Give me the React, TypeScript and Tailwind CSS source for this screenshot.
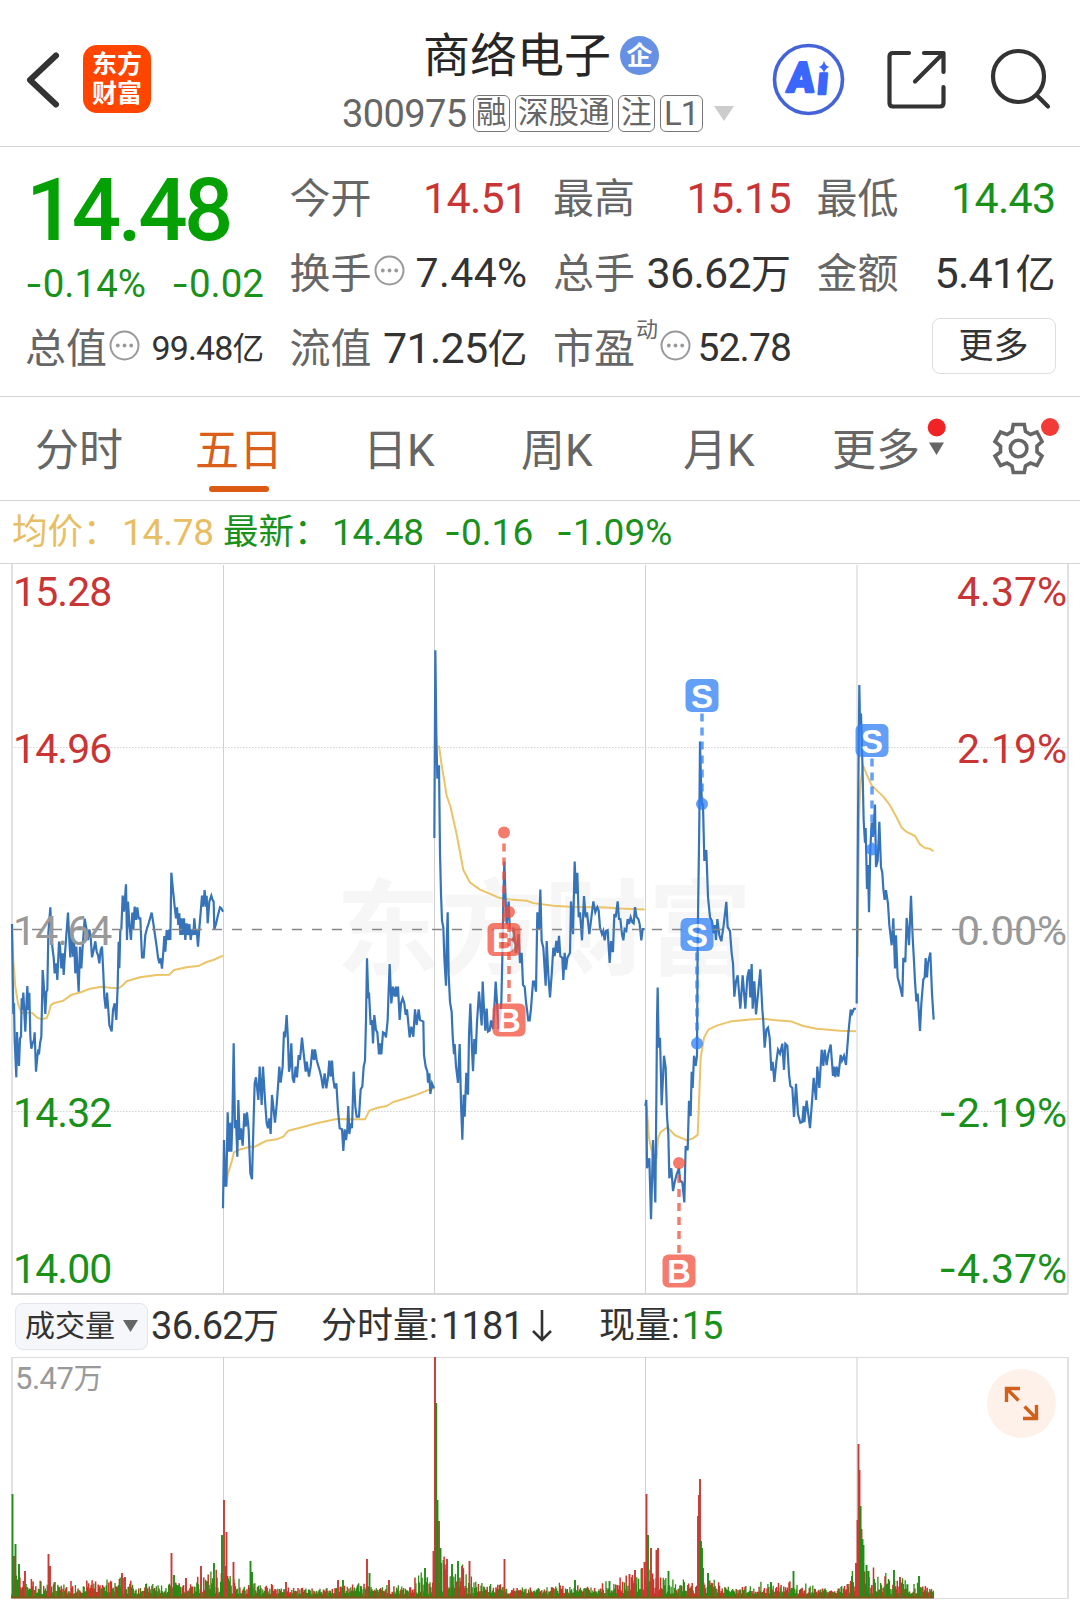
import React from "react";

const GREEN = "#1a911a";
const RED = "#c93535";

interface Session {
    transform: string,
    price: string,
    avg: string,
}

interface Mark {
    type: "B" | "S",
    x: number,
    y: number,
    dotX: number,
    dotY: number,
}

const sessions: Session[] = [
    {
        transform: "translate(0 840) scale(0.33333)",
        price: "36,252 38,400 40,522 42,490 44,600 49,712 51,576 54,640 57,678 60,595 63,590 65,475 67,510 70,458 73,520 76,575 79,500 82,438 85,510 88,458 91,590 94,626 98,610 102,600 104,577 108,695 112,650 115,628 117,643 120,610 124,590 128,390 131,430 136,522 139,455 142,450 145,280 151,202 155,300 158,330 161,352 164,400 169,370 172,420 177,305 180,318 184,385 188,340 191,405 195,340 199,285 204,218 208,300 211,352 216,260 219,350 222,300 226,400 229,320 233,400 236,455 240,320 244,385 248,320 254,236 260,270 264,300 268,268 272,290 276,352 281,330 286,304 290,335 294,345 298,370 302,330 306,320 310,400 313,470 317,506 321,458 325,510 328,555 335,574 339,510 344,490 349,540 353,440 356,305 358,385 361,270 364,268 368,167 372,215 378,133 381,300 384,185 388,250 393,300 397,218 400,268 404,200 408,240 412,202 416,235 421,235 426,352 431,352 436,285 441,265 446,250 455,218 460,250 465,285 470,320 474,352 478,370 482,355 486,386 490,335 493,288 496,335 500,270 504,300 508,268 511,300 514,98 519,150 524,200 528,235 531,202 535,255 538,220 541,285 545,235 548,285 552,235 556,300 560,250 564,285 568,252 572,300 576,268 580,285 583,235 587,285 590,268 594,320 598,265 602,218 606,167 610,200 614,150 618,200 620,167 623,250 628,185 634,167 638,180 641,185 643,268 648,252 654,225 660,202 664,205 669,215",
        avg: "36,270 40,360 46,440 54,490 64,518 85,518 98,520 110,532 125,538 140,534 146,520 152,496 160,490 190,482 215,464 245,456 270,446 305,440 330,443 355,445 366,438 380,424 420,412 470,405 508,404 522,390 560,382 598,377 620,366 640,360 669,347",
    },
    {
        transform: "translate(0 840) scale(0.33333)",
        price: "669,1105 672,900 676,1037 679,1037 683,817 687,935 690,848 694,935 697,850 701,610 705,865 708,840 712,950 715,780 719,900 723,865 728,917 733,820 737,860 741,817 746,870 751,1000 756,1018 760,870 764,730 768,712 775,780 779,680 785,795 789,680 795,780 800,850 804,865 808,835 812,882 816,765 820,800 825,848 830,795 834,740 838,680 842,728 848,680 852,575 855,592 860,525 864,600 867,695 870,680 874,610 878,715 882,728 887,680 891,712 896,645 900,660 906,593 911,640 917,695 920,665 927,710 932,680 937,628 942,660 945,628 950,660 955,678 960,695 964,712 969,745 974,700 979,745 984,712 988,662 992,710 996,662 1000,720 1004,745 1009,730 1014,810 1019,865 1026,868 1030,933 1034,868 1038,900 1042,868 1045,798 1048,882 1052,850 1056,865 1061,695 1066,800 1070,830 1077,830 1082,748 1087,740 1091,680 1095,662 1098,540 1101,355 1105,475 1107,458 1112,555 1116,540 1119,610 1123,525 1128,570 1132,577 1137,643 1140,610 1144,643 1149,577 1154,580 1158,592 1163,540 1166,450 1169,372 1174,490 1179,440 1184,470 1188,440 1191,470 1194,440 1199,540 1203,490 1208,475 1213,490 1217,525 1221,508 1229,592 1234,560 1240,590 1245,508 1250,555 1256,508 1260,540 1265,542 1270,545 1272,645 1277,680 1282,695 1284,728 1288,700 1291,762 1296,730 1302,745",
        avg: "678,1035 684,1000 695,965 702,937 715,930 750,920 765,920 780,912 800,902 830,898 850,890 865,872 900,863 950,850 1010,837 1050,838 1095,838 1108,812 1130,804 1160,798 1180,786 1220,774 1250,764 1290,748 1302,745",
    },
    {
        transform: "translate(420 630) scale(0.33333 0.33803)",
        price: "43,615 46,60 49,310 52,440 57,400 60,660 63,780 66,860 70,880 73,970 78,1052 80,930 83,835 86,1020 90,1100 95,1130 98,1200 102,1255 104,1225 108,1290 114,1340 119,1225 123,1400 127,1508 131,1375 134,1440 139,1310 144,1375 147,1200 151,1105 156,1240 159,1305 163,1210 167,1255 171,1160 177,1070 181,1120 185,1170 188,1040 192,1120 196,1185 200,1120 204,1188 209,1185 213,1155 219,1180 223,1120 227,1040 231,1100 236,1180 240,1150 244,1100 247,970 250,800 253,685 257,800 260,870 266,803 270,900 275,950 280,880 288,955 296,900 300,985 305,955 309,1050 314,1055 318,1100 325,1155 329,1155 333,1120 339,1040 343,1040 348,1070 352,835 357,885 361,768 365,920 370,940 377,1052 380,920 385,1020 390,1087 395,1020 400,940 404,965 409,920 413,955 417,905 421,965 427,970 430,1035 434,955 438,1005 442,970 450,955 453,803 459,900 464,685 468,780 472,718 476,850 480,835 486,918 492,787 497,850 501,835 508,900 513,860 520,803 526,835 532,820 536,830 540,880 546,900 550,890 554,918 558,890 563,888 569,985 573,920 576,950 579,950 583,840 587,850 593,803 597,855 601,855 606,900 610,918 614,885 619,890 623,855 627,870 632,850 637,865 641,868 645,820 650,850 655,855 659,870 664,918 668,885 674,885",
        avg: "57,342 65,400 80,490 92,525 110,605 130,710 150,747 180,768 240,793 270,797 320,801 340,808 400,816 450,819 560,821 600,824 674,827",
    },
    {
        transform: "translate(630 660) scale(0.33333 0.40177)",
        price: "46,1110 49,1095 51,1265 58,1240 63,1392 66,1300 69,1195 76,1350 79,1100 81,900 83,815 86,965 90,940 95,1108 102,985 107,1015 111,1135 115,1180 118,1290 124,1265 129,1322 134,1300 140,1280 147,1265 150,1295 157,1300 163,1350 167,1210 173,1220 177,1097 182,1135 185,1025 188,1065 192,985 197,1010 201,985 203,700 205,580 208,400 210,203 213,300 216,360 219,360 223,500 229,473 234,590 240,640 246,650 250,680 254,660 258,697 262,645 268,685 274,700 281,660 289,602 293,665 300,675 305,730 309,755 313,838 318,800 323,785 331,868 338,785 346,868 352,790 357,770 361,840 365,757 368,868 373,800 378,882 383,840 391,770 397,870 400,900 404,965 409,920 414,915 419,940 424,1022 428,1000 433,1050 439,1000 444,970 450,980 457,955 462,1020 466,955 472,960 477,1030 481,1060 487,1065 492,1137 498,1055 504,1130 511,1152 517,1150 521,1110 523,1150 530,1097 534,1125 540,1165 546,1100 551,1040 558,1095 562,1012 568,1065 575,970 580,1010 584,970 590,1008 595,980 602,957 609,1035 612,1012 616,1038 620,1012 625,1037 632,983 636,997 642,985 648,1008 655,930 662,870 666,880 672,868 678,868",
        avg: "50,1110 57,1190 70,1240 80,1240 84,1190 92,1175 112,1163 135,1183 155,1190 172,1196 190,1190 203,1182 207,1100 212,990 222,940 235,920 260,910 300,900 360,895 400,893 430,896 485,900 520,911 560,918 630,923 678,924",
    },
    {
        transform: "translate(630 660) scale(0.33333 0.40177)",
        price: "680,855 684,400 688,62 690,160 693,133 697,250 701,400 705,455 707,418 711,570 714,510 717,628 721,470 725,405 729,440 735,360 738,515 743,500 748,403 753,515 757,530 760,570 764,597 768,573 774,607 778,660 785,710 790,643 795,768 798,685 803,790 810,812 817,838 820,742 826,752 830,642 837,710 843,587 848,690 852,750 855,800 859,850 863,830 870,923 874,855 880,795 884,790 887,742 891,790 894,755 901,728 906,830 911,895",
        avg: "683,740 687,400 691,310 699,262 710,285 725,312 760,340 780,362 800,392 815,417 830,428 855,438 870,459 885,468 900,470 911,476",
    },
];

const marks: Mark[] = [
    { type: "B", x: 504, y: 939.5, dotX: 504, dotY: 832.5 },
    { type: "B", x: 509, y: 1020, dotX: 509, dotY: 912 },
    { type: "B", x: 679, y: 1271, dotX: 679, dotY: 1163 },
    { type: "S", x: 702, y: 695.5, dotX: 702, dotY: 804 },
    { type: "S", x: 697, y: 934.5, dotX: 697, dotY: 1043.5 },
    { type: "S", x: 872, y: 740.5, dotX: 872, dotY: 849.5 },
];

const priceLabels = [
    { y: 591, price: "15.28", pct: "4.37%", color: RED },
    { y: 748, price: "14.96", pct: "2.19%", color: RED },
    { y: 930, price: "14.64", pct: "0.00%", color: "#999999" },
    { y: 1112, price: "14.32", pct: "-2.19%", color: GREEN },
    { y: 1268, price: "14.00", pct: "-4.37%", color: GREEN },
];

// [x, height] of the quiet volume level, interpolated between the points
const level = [
    [12, 34], [20, 30], [40, 16], [60, 14], [120, 20], [140, 14], [165, 12], [175, 18], [185, 12], [200, 24], [215, 34],
    [230, 34], [240, 20], [255, 14], [290, 8], [320, 7], [350, 16], [380, 9], [410, 15], [425, 28], [440, 46], [465, 32],
    [480, 14], [520, 8], [560, 12], [600, 11], [620, 20], [640, 34], [655, 46], [665, 20], [685, 18], [695, 12], [708, 22],
    [720, 12], [790, 14], [830, 8], [850, 22], [865, 36], [880, 30], [900, 24], [920, 14], [934, 10],
];

const redSpikes = [
    [14, 42], [25, 27], [48.5, 44], [50, 32], [122, 25], [125, 21], [171.5, 45], [186, 20], [201, 32], [224, 98], [226.5, 66],
    [233.5, 36], [286, 16], [338, 18], [367, 39], [389, 18], [433.5, 47], [435, 241], [439, 77], [447, 39], [462, 32],
    [469.5, 37], [504.5, 39], [629.5, 24], [635, 28], [642, 30], [644.5, 36], [646.5, 104], [651, 50], [656.5, 48],
    [658, 50], [698, 82], [699, 103], [700, 119], [703, 30], [847.5, 14], [856, 35], [857.5, 78], [858.5, 154],
    [859.5, 128], [861.5, 69], [900, 21],
];

const greenSpikes = [
    [12.5, 104], [15.5, 54], [19, 34], [174, 23], [214, 35], [222, 63], [250.5, 37], [252, 26], [343, 18], [369.5, 25],
    [425, 30], [436.2, 195], [437.5, 98], [440.5, 50], [452, 34], [458, 37], [575, 18], [609.5, 17], [648, 63],
    [668.5, 27], [684, 16], [701, 57], [702, 50], [708, 25], [771, 16], [793.5, 27], [852, 22], [860.6, 92],
    [862.5, 59], [863.5, 53], [866.5, 33], [868.5, 27], [894, 28], [919, 22],
];

function bar(x: number, h: number) {
    return `M${x.toFixed(1)} 1598V${(1598 - h).toFixed(1)}`;
}

function levelAt(x: number) {
    const i = Math.max(1, level.findIndex((p) => p[0] >= x));
    const [x0, h0] = level[i - 1];
    const [x1, h1] = level[i];
    return h0 + ((h1 - h0) * (x - x0)) / (x1 - x0);
}

function buildVolume() {
    let red = "";
    let green = "";
    let seed = 7;
    const next = () => {
        seed = (seed * 16807) % 2147483647;
        return seed / 2147483647;
    };
    for (let x = 12; x < 934; x += 0.88) {
        const h = 4 + levelAt(x) * next() * (0.4 + 0.6 * next());
        if (next() > 0.5) {
            red += bar(x, h);
        } else {
            green += bar(x, h);
        }
    }
    return { red, green };
}

const volume = buildVolume();

function Dots() {
    return (
        <svg className="h-[31px] w-[31px] shrink-0" viewBox="0 0 31 31" fill="#999">
            <circle cx="15.5" cy="15.5" r="14" fill="none" stroke="#999" strokeWidth="2" />
            <circle cx="8.8" cy="15.5" r="1.9" />
            <circle cx="15.5" cy="15.5" r="1.9" />
            <circle cx="22.2" cy="15.5" r="1.9" />
        </svg>
    )
}

function Tag({ children }: { children: React.ReactNode }) {
    return (
        <span className="flex h-[37px] shrink-0 items-center rounded-md border border-[#777] px-[2.500px] text-[30.500px] leading-none whitespace-nowrap">
            {children}
        </span>
    )
}

function Signed({ children }: { children: string }) {
    return (
        <span>
            <span className="font-[Inter] tracking-normal">-</span>
            {children}
        </span>
    )
}

function Header() {
    return (
        <header className="flex h-[147px] border-b border-[#d4d4d4] text-[#262626]">
            <svg className="mt-[45px] ml-6 h-[70px] w-10 shrink-0" viewBox="24 45 40 70" fill="none" stroke="#333" strokeWidth="6" strokeLinecap="round" strokeLinejoin="round">
                <path d="M56 55.500L30 80L56 104.500" />
            </svg>
            <div className="mt-[45px] ml-[19px] flex h-[68px] w-[68px] shrink-0 flex-col items-center justify-center rounded-[14px] bg-[#ff4500] text-[25px] leading-[29px] font-bold text-white">
                <span>东方</span>
                <span>财富</span>
            </div>
            <div className="ml-[191px] w-[426px] shrink-0">
                <div className="mt-[27px] ml-[81px] flex h-14 items-center">
                    <h1 className="text-[47px] leading-none">商络电子</h1>
                    <span className="mt-px ml-[9px] flex h-[39px] w-[39px] items-center justify-center rounded-full bg-[#6690e4] text-[26px] leading-none font-bold text-white">企</span>
                </div>
                <div className="mt-3 flex h-[37px] items-center gap-[4.500px] text-[#666]">
                    <span className="w-[126px] shrink-0 text-[38px] leading-none tracking-[-0.6px]">300975</span>
                    <Tag>融</Tag>
                    <Tag>深股通</Tag>
                    <Tag>注</Tag>
                    <Tag><span className="px-px text-[33px] tracking-[-1px]">L1</span></Tag>
                    <svg className="ml-1.5 h-[15px] w-[22px] shrink-0" viewBox="0 0 22 15"><path d="M1 0H21L11 15Z" fill="#ccc" /></svg>
                </div>
            </div>
            <svg className="mt-[42px] h-[75px] w-[290px] shrink-0" viewBox="768 42 290 75" fill="none" strokeLinecap="round" strokeLinejoin="round">
                <circle cx="808.500" cy="79.500" r="34" stroke="#4463d9" strokeWidth="3.600" />
                <g fill="#3a66fb" stroke="#3a66fb" strokeWidth="2.500" fontFamily="Roboto" fontWeight="900">
                    <text x="787" y="92.500" fontSize="42" textLength="27" lengthAdjust="spacingAndGlyphs" transform="translate(9 0) skewX(-6)">A</text>
                    <text x="816" y="94" fontSize="39" transform="translate(8.500 0) skewX(-5)">ı</text>
                </g>
                <path d="M824 60.500Q825 66 829.500 67Q825 68 824 73.500Q823 68 818.500 67Q823 66 824 60.500Z" fill="#3a66fb" />
                <g stroke="#333" strokeWidth="4.200">
                    <path d="M909 53H893Q889.500 53 889.500 56.500V103Q889.500 106.500 893 106.500H940Q943.500 106.500 943.500 103V87" />
                    <path d="M924 53H943.500V72M943 53.500L915 81.500" />
                    <circle cx="1018.500" cy="76.500" r="25.500" />
                    <path d="M1037 95.500L1048 106.500" />
                </g>
            </svg>
        </header>
    )
}

interface QuoteItemProps {
    label: string,
    value: string,
    unit?: string,
    size?: string,
    color?: string,
    sup?: string,
    dots?: boolean,
}

function QuoteItem({ label, value, unit, size = "text-[43px] tracking-[-0.7px]", color = "text-[#333]", sup, dots }: QuoteItemProps) {
    return (
        <div className="flex h-[75px] items-center">
            <span className="pt-1 text-[41px] text-[#666]">{label}</span>
            {sup && <span className="mb-9 ml-px text-[22px] text-[#666]">{sup}</span>}
            {dots && <span className="-mt-1 ml-0.5"><Dots /></span>}
            <span className={`ml-auto pt-0.5 whitespace-nowrap ${size} ${color}`}>
                {value}
                {unit && <span className="text-[0.93em] tracking-normal">{unit}</span>}
            </span>
        </div>
    )
}

function Quote() {
    return (
        <section className="grid h-[250px] grid-cols-[239px_238px_238px_239px] gap-x-[25.500px] border-b border-[#d4d4d4] pt-[13px] pl-[25px] leading-none">
            <div>
                <div className="h-[90px] pt-[7px] pl-px text-[87px] leading-[87px] font-medium tracking-[-3.600px] text-[#04a004]">14.48</div>
                <div className="mt-[7px] flex h-[53px] items-center justify-between text-[38.500px] text-[#1a911a]">
                    <Signed>0.14%</Signed>
                    <Signed>0.02</Signed>
                </div>
                <QuoteItem label="总值" value="99.48" unit="亿" dots size="text-[34px] tracking-[-0.9px]" />
            </div>
            <div>
                <QuoteItem label="今开" value="14.51" color="text-[#c93535]" />
                <QuoteItem label="换手" value="7.44%" dots size="text-[41px] tracking-[0.4px]" />
                <QuoteItem label="流值" value="71.25" unit="亿" />
            </div>
            <div>
                <QuoteItem label="最高" value="15.15" color="text-[#c93535]" />
                <QuoteItem label="总手" value="36.62" unit="万" />
                <QuoteItem label="市盈" value="52.78" sup="动" dots size="text-[39px] tracking-[-0.9px]" />
            </div>
            <div>
                <QuoteItem label="最低" value="14.43" color="text-[#1a911a]" />
                <QuoteItem label="金额" value="5.41" unit="亿" />
                <div className="flex h-[75px] items-center justify-end">
                    <button className="-mt-1 h-14 w-[124px] rounded-lg border border-[#ddd] pt-0.5 text-[35px] text-[#333]">更多</button>
                </div>
            </div>
        </section>
    )
}

function Tabs() {
    return (
        <nav className="flex h-[104px] border-b border-[#d4d4d4] text-[44px] leading-[108px] whitespace-nowrap text-[#666]">
            <span className="w-[160px] pl-[35px]">分时</span>
            <span className="relative w-[160px] pl-[35px] text-[#d95f1a]">
                五日
                <span className="absolute bottom-[8px] left-[49px] h-[6px] w-[60px] rounded-full bg-[#dc5a14]" />
            </span>
            <span className="w-[160px] pl-[43px]">日K</span>
            <span className="w-[160px] pl-[41px]">周K</span>
            <span className="w-[160px] pl-[43px]">月K</span>
            <span className="w-[127px] pl-[32px]">更多</span>
            <svg className="mt-[20px] h-[70px] w-[140px]" viewBox="927 417 140 70">
                <path d="M929 442.500H944L936.500 455Z" fill="#666" />
                <path
                    d="M1013.300 424.500H1024.300L1025.500 431.500L1030.500 434.500L1037 432L1042 441.500L1037 446V452L1042 456L1037 465.500L1030.500 463L1025.500 466L1024.300 472.500H1013.300L1012 466L1007 463L1000.500 465.500L995 456L1000.500 452V446L995 441.500L1000.500 432L1007 434.500L1012 431.500Z"
                    fill="none"
                    stroke="#666"
                    strokeWidth="3.600"
                />
                <circle cx="1018.600" cy="448.500" r="8.300" fill="none" stroke="#666" strokeWidth="3.600" />
                <circle cx="936.700" cy="427.500" r="9" fill="#f02424" />
                <circle cx="1050" cy="427" r="9" fill="#f23a36" />
            </svg>
        </nav>
    )
}

function Legend() {
    return (
        <div className="flex h-[62px] items-center pl-3 text-[37px] leading-none whitespace-nowrap text-[#1a911a]">
            <span className="w-[110px] pt-px text-[35.500px] text-[#e8be62]">均价：</span>
            <span className="w-[101px] tracking-[-0.2px] text-[#e8be62]">14.78</span>
            <span className="w-[109px] pt-px text-[35.500px]">最新：</span>
            <span className="w-[112px] tracking-[-0.2px]">14.48</span>
            <span className="w-[112px]"><Signed>0.16</Signed></span>
            <Signed>1.09%</Signed>
        </div>
    )
}

function Marker({ type, x, y, dotX, dotY }: Mark) {
    const color = type === "B" ? "#f2503c" : "#2f80f5";
    const edge = dotY > y ? y + 18 : y - 18;
    return (
        <g opacity="0.75">
            <path d={`M${dotX} ${edge}V${dotY}`} stroke={color} strokeWidth="3.5" strokeDasharray="8 6" />
            <circle cx={dotX} cy={dotY} r="6" fill={color} />
            <rect x={x - 16.5} y={y - 16.5} width="33" height="33" rx="6" fill={color} />
            <text x={x} y={y + 12} textAnchor="middle" fill="#fff" fontFamily="Liberation Sans" fontWeight="700" fontSize="33">{type}</text>
        </g>
    )
}

function PriceChart() {
    return (
        <svg className="block h-[733px] w-full" viewBox="0 563 1080 733" fill="none">
            <text x="336" y="967" fontSize="104" fontWeight="700" fill="#f6f6f6">东方财富</text>
            <path d="M0 563.500H1080" stroke="#d4d4d4" />
            <path d="M12 564V1294M1068 564V1294" stroke="#e2e2e2" strokeWidth="2" />
            <path d="M223.500 565V1294M434.500 565V1294M645.500 565V1294M857 565V1294" stroke="#d0d0d0" />
            <path d="M12 747.500H1068M12 1111.500H1068" stroke="#d4d4d4" strokeDasharray="1.500 1.500" />
            <path d="M11 1294H1068" stroke="#d6d6d6" strokeWidth="2" />
            {sessions.map((s) => (
                <g key={s.price} transform={s.transform}>
                    <polyline points={s.avg} stroke="#ecc468" strokeWidth="2" vectorEffect="non-scaling-stroke" strokeLinejoin="round" />
                </g>
            ))}
            {sessions.map((s) => (
                <g key={s.price} transform={s.transform}>
                    <polyline points={s.price} stroke="#3673b8" strokeWidth="2.2" vectorEffect="non-scaling-stroke" />
                </g>
            ))}
            <path d="M12 929.500H1068" stroke="#888" strokeWidth="1.500" strokeDasharray="10 10" />
            {priceLabels.map((l) => (
                <g key={l.y} fill={l.color} fontSize="41">
                    <text x="13" y={l.y + 14.5} letterSpacing="-0.9">{l.price}</text>
                    <text x="1067" y={l.y + 14.5} textAnchor="end">
                        {l.pct.startsWith("-") && <tspan fontFamily="Inter">-</tspan>}
                        {l.pct.replace("-", "")}
                    </text>
                </g>
            ))}
            {marks.map((m) => (
                <Marker key={m.dotY} {...m} />
            ))}
        </svg>
    )
}

function VolumeBar() {
    return (
        <div className="flex h-[60px] items-center pl-[15px] text-[38px] leading-none whitespace-nowrap text-[#333]">
            <button className="flex h-[47px] w-[133px] items-center rounded-lg border border-[#e4e5ec] bg-[#f6f7fa] pl-[9px] text-[30px]">
                成交量
                <svg className="ml-[8px] h-3 w-[15px]" viewBox="0 0 15 12"><path d="M0 0H15L7.500 12Z" fill="#666" /></svg>
            </button>
            <span className="ml-[3px] w-[170px] tracking-[-0.7px]">36.62<span className="text-[36px]">万</span></span>
            <span className="w-[120px] text-[36px]">分时量:</span>
            <span className="w-[90px] tracking-[-0.8px]">1181</span>
            <svg className="h-[34px] w-[22px]" viewBox="0 0 22 34" fill="none" stroke="#333" strokeWidth="2.600">
                <path d="M11 1V31M2 22L11 31L20 22" />
            </svg>
            <span className="ml-[46px] text-[36px]">现量:</span>
            <span className="ml-0.5 tracking-[-1px] text-[#1a911a]">15</span>
        </div>
    )
}

function VolumeChart() {
    return (
        <svg className="block h-[257px] w-full" viewBox="0 1356 1080 257" fill="none">
            <path d="M12 1357.500H1068M12 1598.500H1068" stroke="#dcdcdc" />
            <path d="M12 1357V1598M1068 1357V1599" stroke="#e2e2e2" strokeWidth="2" />
            <path d="M223.500 1357V1598M434.500 1357V1598M645.500 1357V1598M857 1357V1598" stroke="#d0d0d0" />
            <path d={volume.red} stroke="#cc3328" strokeWidth="1.500" />
            <path d={volume.green} stroke="#2c8a12" strokeWidth="1.300" />
            <path d={redSpikes.map(([x, h]) => bar(x, h)).join("")} stroke="#c83a34" strokeWidth="1.900" />
            <path d={greenSpikes.map(([x, h]) => bar(x, h)).join("")} stroke="#228c18" strokeWidth="1.900" />
            <path d="M11 1597.500H934" stroke="#7a5a14" strokeWidth="2" />
            <text x="15" y="1389" fontSize="31" letterSpacing="-0.5" fill="#999">5.47<tspan fontSize="29">万</tspan></text>
            <circle cx="1021.500" cy="1403.500" r="34.500" fill="#fef1ea" />
            <path d="M1006.500 1402V1388.500H1020M1007 1389L1018.500 1400.500M1036.500 1405V1418.500H1023M1036 1418L1024.500 1406.500" stroke="#d0601c" strokeWidth="3.400" />
        </svg>
    )
}

export default function App() {
    return (
        <main className="h-[1613px] w-[1080px] overflow-hidden bg-white font-[Roboto,'Noto_Sans_CJK_SC',sans-serif]">
            <Header />
            <Quote />
            <Tabs />
            <Legend />
            <PriceChart />
            <VolumeBar />
            <VolumeChart />
        </main>
    )
}
